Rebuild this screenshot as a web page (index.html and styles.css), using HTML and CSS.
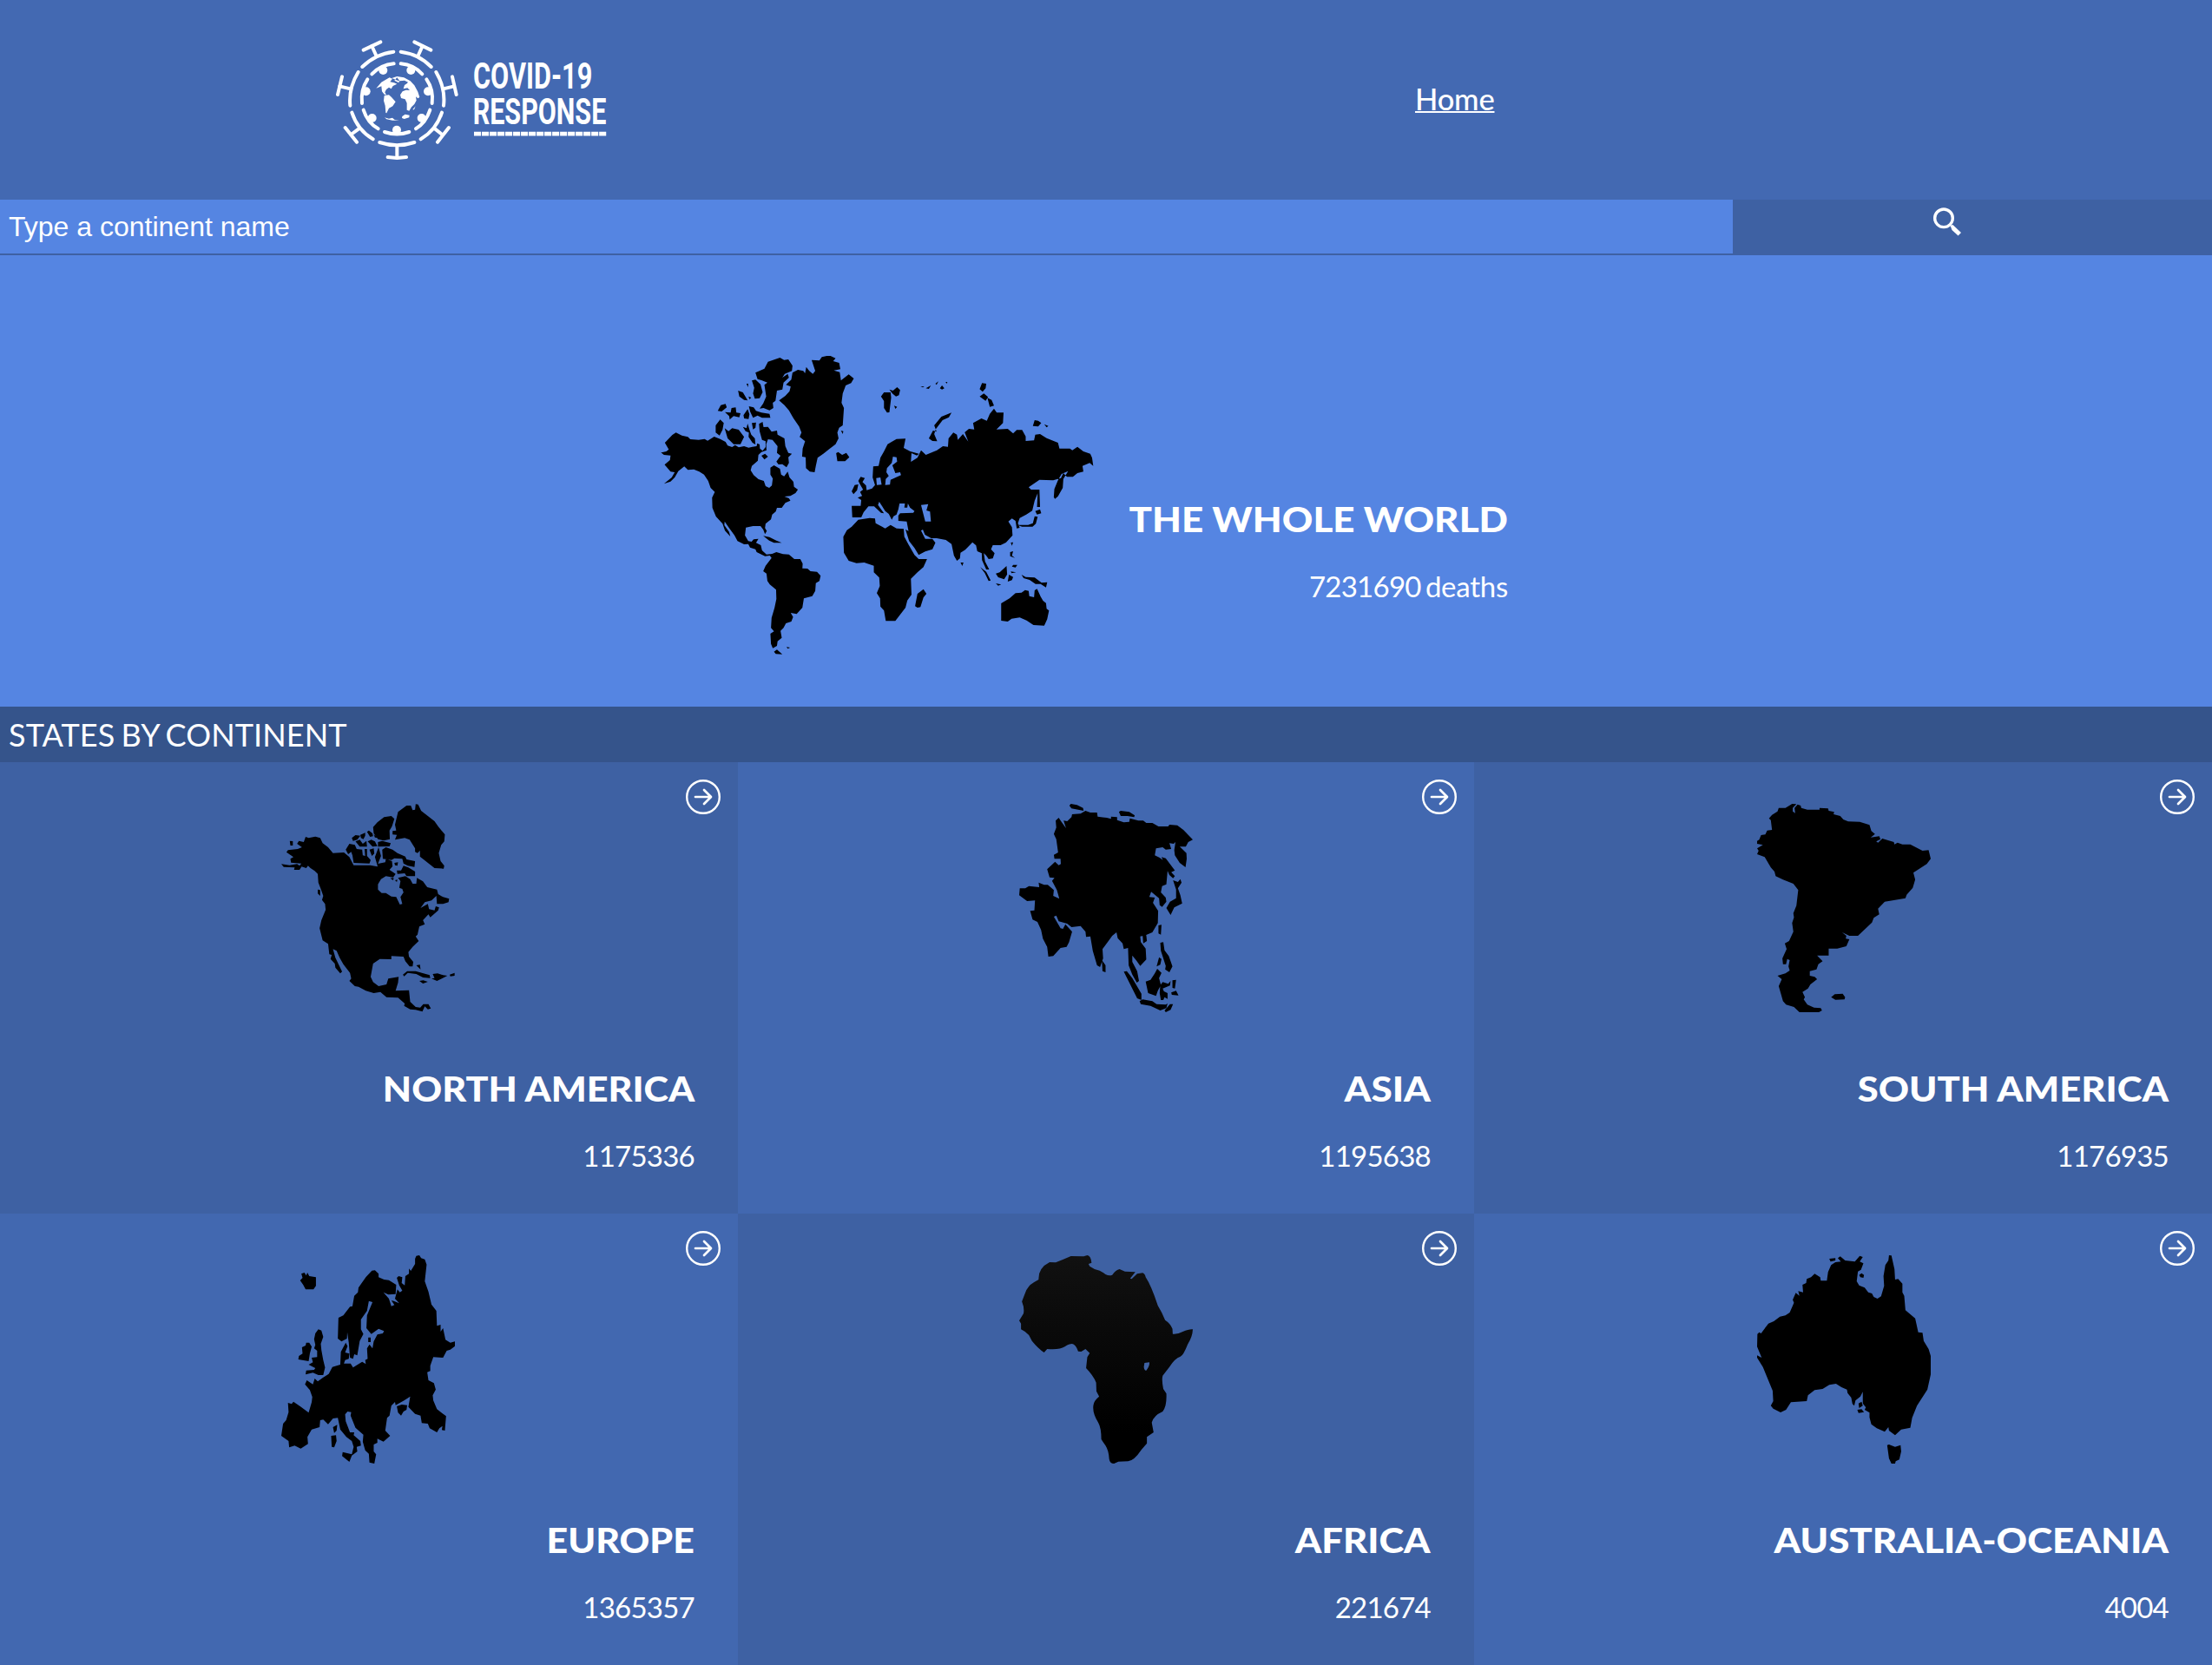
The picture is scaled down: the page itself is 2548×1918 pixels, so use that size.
FILE: index.html
```html
<!DOCTYPE html>
<html lang="en">
<head>
<meta charset="utf-8">
<title>Covid-19 Response</title>
<link rel="stylesheet" href="styles.css">
</head>
<body>
<svg class="defs" width="0" height="0">
  <symbol id="arrow" viewBox="0 0 40 40"><circle cx="20" cy="20" r="18.8" fill="none" stroke="#fff" stroke-width="2.4"/><path d="M11 20H28M21 12L29 20L21 28" fill="none" stroke="#fff" stroke-width="2.7" stroke-linecap="round" stroke-linejoin="round"/></symbol>
</svg>
<header class="header">
  <svg class="logo" viewBox="51 48 936 414">
    <g fill="none" stroke="#fff" stroke-width="12" stroke-linecap="round" stroke-linejoin="round">
      <path d="M142 141Q188 96 250 89M275 89Q338 97 380 141M128 159Q94 215 100 275M397 159Q430 215 423 275M106 299Q126 360 179 391M417 299Q397 360 344 391M202 402Q262 422 322 402"/>
      <path d="M146 83L205 55M322 55L379 83M72 175L57 237M453 175L467 237M83 351L123 401M441 351L402 401M230 453L262 456L294 453"/>
      <path d="M175 69L190 102M350 69L335 102M64 208L101 217M459 208L422 217M103 375L133 353M418 375L390 353M262 414V452"/>
      <path d="M175 166Q206 134 251 130M275 130Q320 134 349 166M160 184Q136 220 141 267M364 184Q389 220 383 267M146 290Q160 334 197 355M376 290Q362 334 327 355M219 366Q262 381 304 366"/>
    </g>
    <g fill="#fff">
      <circle cx="214" cy="153" r="15"/><circle cx="310" cy="153" r="15"/><circle cx="155" cy="226" r="15"/><circle cx="369" cy="226" r="15"/><circle cx="176" cy="318" r="15"/><circle cx="347" cy="318" r="15"/><circle cx="261" cy="359" r="15"/>
      <path d="M190 215L208 194L236 178L246 182L238 193L252 196L262 200L248 207L242 217L234 212L225 219L220 229L225 238L218 236L210 226L208 208ZM218 240L234 238L243 246L257 262L247 277L234 284L226 301L223 300L221 275L216 258ZM244 180L262 174L286 178L308 190L322 205L334 227L340 246L334 250L327 244L329 257L322 270L312 280L304 293L296 290L296 266L290 253L276 249L273 238L281 226L293 221L306 222L298 214L284 217L288 204L296 199L300 194L288 188L272 190L264 188ZM262 178L253 188L268 196L270 188ZM316 289L326 277L321 289ZM219 316L234 320L246 317L254 324L270 326L246 326L226 322ZM280 312L290 305L305 308L304 316L287 321L279 318Z"/>
      <text class="logo-text" x="525" y="216" textLength="412" lengthAdjust="spacingAndGlyphs">COVID-19</text>
      <text class="logo-text" x="524" y="339" textLength="461" lengthAdjust="spacingAndGlyphs">RESPONSE</text>
    </g>
    <path d="M528 372.500H985" stroke="#fff" stroke-width="14" stroke-dasharray="24.200 2.830"/>
  </svg>
  <nav class="nav"><a class="nav-link" href="#">Home</a></nav>
</header>
<form class="search">
  <input class="search-input" type="text" placeholder="Type a continent name">
  <button class="search-button" type="button" aria-label="Search"><svg class="search-icon" viewBox="0 0 32 34"><ellipse cx="12" cy="12.300" rx="10.300" ry="10.300" fill="none" stroke="#fff" stroke-width="3.400"/><path d="M19.500 20.800L22.500 20L32 29L28.600 32.500L21.500 26Z" fill="#fff"/></svg></button>
</form>
<section class="hero">
  <svg class="world" viewBox="58 60 1452 1032" preserveAspectRatio="none">
    <path d="M62 394L80 390L88 383L75 360L100 333L112 325L132 335L152 340L160 348L188 350L208 347L218 353L240 339L260 347L278 357L285 370L300 375L310 368L322 376L340 372L355 377L368 374L382 372L384 362L392 366L393 380L402 388L412 375L412 355L400 350L392 320L390 295L402 288L405 306L420 305L432 322L450 318L452 332L475 345L478 372L488 395L500 398L488 410L490 430L482 445L468 434L455 435L448 425L462 405L450 395L452 372L435 350L420 348L414 365L415 386L398 392L388 402L386 422L366 440L362 455L372 472L388 486L406 492L412 510L424 516L433 508L436 484L428 470L428 446L440 438L460 450L464 470L474 476L486 460L492 480L505 495L507 512L520 522L512 534L495 544L475 546L490 552L495 560L478 568L466 585L450 585L446 598L434 608L430 625L412 640L410 655L416 665L410 676L404 660L395 648L370 648L346 653L343 680L354 700L365 702L372 694L388 692L380 706L396 714L400 732L415 746L434 744L448 738L470 745L490 746L508 762L528 762L536 778L535 794L552 795L562 804L584 806L596 820L592 838L580 845L578 872L568 890L540 898L535 930L516 952L496 948L504 962L498 978L480 984L472 1000L462 1010L466 1034L452 1046L450 1062L436 1070L430 1055L428 1020L440 1012L430 1000L432 965L442 930L448 900L447 868L426 850L418 838L415 812L404 804L412 785L432 758L426 750L410 752L382 738L378 728L360 722L354 710L340 711L318 700L308 680L290 655L275 632L274 645L290 668L294 684L276 664L268 640L246 615L234 585L233 550L242 530L228 516L220 492L206 470L190 460L172 452L152 454L140 442L120 458L108 480L94 494L72 502L98 480L108 462L94 460L74 436L92 420L94 404L72 402Z"/>
    <path d="M457 214L478 198L492 182L496 166L480 160L498 142L502 118L520 108L538 112L544 120L548 98L558 112L570 122L578 112L566 74L592 76L600 64L625 58L646 68L638 78L658 84L662 106L640 110L660 116L664 145L690 124L707 138L698 154L680 162L670 190L666 222L674 240L672 270L670 300L658 308L652 325L656 345L646 365L625 382L605 398L586 412L580 440L576 462L560 460L547 448L546 410L534 408L536 380L544 355L526 340L532 325L524 304L505 275L490 248L475 230Z"/>
    <path d="M378 118L408 104L420 80L460 66L474 74L488 72L502 94L500 112L476 122L468 135L486 122L490 135L472 152L468 176L450 180L445 215L436 222L438 240L425 248L405 240L392 242L404 224L414 200L408 160L418 152L398 144L385 140ZM366 145L378 142L395 158L402 185L392 206L376 208L370 190L374 170ZM320 180L336 186L352 214L340 212L324 200ZM348 156L354 156L353 168ZM355 200L364 204L358 210ZM252 250L262 230L278 226L282 238L265 252ZM276 254L295 256L298 240L312 238L314 256L328 258L324 272L305 268L292 280L290 268ZM338 265L352 244L358 262L355 278L340 276ZM356 234L372 238L380 250L398 256L425 260L428 274L400 274L385 266L370 274L360 252ZM245 300L260 280L272 292L268 315L258 335L245 325ZM275 310L288 320L300 310L322 315L340 340L328 365L305 365L285 345ZM336 305L348 310L352 294L358 315L364 332L376 345L378 366L368 360L355 340L356 325L345 320ZM366 292L380 290L378 308L370 314ZM398 405L410 398L420 408L408 418ZM648 396L655 392L668 402L682 395L692 410L678 424L652 424ZM664 318L672 320L670 330ZM798 200L808 186L830 186L832 204L826 255L818 256L808 240L808 216ZM826 176L838 180L852 168L862 178L858 196L848 200L836 190ZM842 232L852 236L846 243ZM930 165L943 166L938 169ZM948 172L965 162L958 174ZM980 156L990 148L984 160ZM995 172L1002 162L1010 172L1002 176ZM1014 150L1020 150L1018 156ZM958 345L972 318L984 322L976 300L1000 270L1034 256L1025 272L1004 282L982 312L976 330L986 355L970 354ZM1128 175L1136 154L1150 156L1148 172L1138 184ZM1128 200L1142 190L1156 202L1148 215ZM1154 205L1168 212L1176 232L1162 236ZM1306 302L1312 282L1324 284L1334 292L1324 304ZM1344 296L1358 302L1352 307ZM1376 548L1378 520L1390 490L1402 468L1424 458L1408 485L1406 516L1390 545L1380 554ZM700 528L710 506L722 504L718 524L706 538ZM720 550L735 544L728 530L738 522L728 504L722 492L730 478L744 482L736 496L748 508L750 524L768 518L778 506L770 480L772 442L790 440L796 412L808 390L820 365L850 347L880 346L874 378L896 390L925 398L918 404L900 396L898 426L920 412L932 386L948 402L985 386L1005 372L1022 374L1024 345L1040 325L1052 332L1055 350L1072 330L1090 356L1078 324L1092 312L1110 314L1106 292L1134 276L1152 284L1162 260L1176 242L1185 256L1208 256L1206 292L1184 314L1222 312L1240 328L1252 316L1270 316L1282 338L1282 354L1310 352L1314 332L1330 330L1352 344L1390 360L1395 380L1430 380L1438 386L1455 374L1475 390L1498 398L1504 412L1508 440L1496 430L1472 440L1475 460L1455 465L1440 478L1420 478L1408 465L1400 482L1374 490L1328 488L1292 514L1300 522L1328 522L1330 582L1320 582L1322 535L1312 560L1304 595L1284 608L1262 620L1256 638L1262 654L1252 656L1248 630L1236 622L1224 632L1236 652L1238 680L1216 705L1198 714L1172 714L1166 728L1178 742L1172 760L1158 762L1150 750L1142 742L1146 770L1160 798L1150 798L1136 766L1135 742L1120 735L1116 715L1104 704L1080 730L1064 740L1062 760L1052 768L1042 750L1034 710L1015 696L984 690L966 690L945 678L938 660L932 664L946 692L970 692L980 706L970 728L946 736L924 748L910 724L892 700L880 660L890 665L884 632L856 630L856 612L862 604L906 602L910 596L895 584L888 570L886 584L876 584L878 570L860 570L856 590L850 608L840 614L834 626L824 606L812 596L792 564L788 575L808 604L798 602L775 580L756 580L740 600L732 618L702 618L700 578L730 578L732 558ZM812 506L828 505L830 488L865 472L862 462L846 465L836 438L852 425L850 410L838 408L834 430L818 448L816 462L824 475L814 485ZM782 482L796 480L800 505L784 506ZM932 575L938 600L946 632L965 632L962 598L950 594L956 572Z" fill-rule="evenodd"/>
    <path d="M700 650L722 626L760 620L778 622L780 638L812 656L830 644L850 656L874 658L876 685L890 712L910 748L924 762L952 762L940 790L920 808L898 830L900 885L886 905L880 930L846 976L814 976L808 940L796 926L795 898L784 880L794 855L792 826L774 808L774 785L742 774L716 776L690 768L674 740L672 685L684 662ZM912 925L920 882L940 866L950 882L940 895L930 928L920 930ZM1200 975V915L1228 898L1248 880L1268 878L1280 869L1292 872L1294 890L1310 894L1312 870L1320 865L1332 892L1340 906L1350 914L1352 934L1360 940L1354 970L1344 992L1308 990L1285 974L1262 964L1235 968L1222 978ZM1268 816L1282 824L1312 826L1335 844L1354 842L1350 860L1332 848L1315 848L1295 834L1275 828ZM1182 812L1195 808L1218 786L1220 815L1210 832L1190 825ZM1130 790L1150 806L1165 836L1158 838L1145 810ZM1182 846L1200 850L1190 854ZM1226 816L1240 824L1236 835L1222 840ZM1232 805L1250 808L1235 811ZM1240 782L1254 782L1248 791L1236 788ZM1230 738L1240 735L1236 750L1246 758L1230 752ZM1232 705L1240 704L1236 716ZM1064 774L1074 774L1070 786ZM1314 596L1330 590L1334 604L1320 608ZM1312 614L1322 616L1316 640L1305 650L1270 650L1254 644L1290 644L1306 638ZM404 682L425 686L448 698L466 706L440 706L424 698ZM440 1082L450 1075L468 1091L446 1090ZM482 1066L494 1068L486 1072Z"/>
  </svg>
  <div class="hero-text"><h2 class="title title-world">THE WHOLE WORLD</h2><p class="count">7231690 <span class="unit">deaths</span></p></div>
</section>
<h3 class="bar">STATES BY CONTINENT</h3>
<main class="grid">
  <article class="card card-dark">
    <svg class="go"><use href="#arrow"/></svg>
    <svg class="map" viewBox="68 78 571 720" preserveAspectRatio="none">
      <path d="M68 286L95 290L120 286L128 292L134 284L100 281L98 268L108 262L85 245L90 238L122 234L136 228L120 216L126 206L142 210L148 192L158 196L180 191L196 196L204 214L222 228L238 248L274 246L292 262L306 290L360 290L385 295L376 262L388 228L396 258L386 285L410 280L412 268L432 276L434 294L424 306L444 320L436 332L412 328L396 338L386 356L386 374L398 386L412 386L430 398L446 400L458 426L466 424L460 400L470 384L466 372L456 368L460 345L452 334L476 328L492 338L500 354L512 354L514 334L534 346L548 366L580 374L584 390L600 400L620 406L618 418L600 424L580 424L578 396L562 412L540 418L526 438L550 424L554 442L572 446L576 432L587 436L584 446L558 470L552 460L534 480L540 494L522 502L516 530L510 536L520 552L500 572L486 590L488 606L502 624L500 640L490 640L476 622L470 606L430 604L430 615L392 614L370 630L362 676L370 694L388 708L414 702L420 682L454 676L452 696L444 724L488 722L492 762L510 780L525 782L535 770L552 770L560 785L550 788L540 778L532 796L510 790L492 788L472 776L474 768L452 748L414 746L394 728L372 732L346 724L322 710L310 708L292 690L298 682L294 662L272 632L260 610L250 586L238 580L246 610L258 636L268 658L262 664L246 644L244 630L230 614L234 600L226 598L222 562L204 550L194 508L200 480L214 444L212 424L202 410L206 396L198 372L190 350L188 320L178 310L164 300L156 292L150 300L135 295L128 306L110 306L112 298L76 296ZM96 206L106 207L106 222L98 222ZM188 374L196 376L196 396L188 388ZM280 236L292 216L310 220L316 234L334 236L336 256L344 258L342 234L350 234L350 258L362 272L358 284L306 282L302 256L298 244L288 252ZM358 236L372 232L374 250L366 258ZM400 236L412 228L434 236L450 248L476 260L480 270L508 276L506 296L484 292L470 284L466 268L440 266L430 272L402 268ZM448 308L462 308L470 292L486 298L508 312L508 328L480 328L474 318L450 320ZM440 282L452 280L450 292L442 290ZM426 335L438 334L436 342ZM442 342L450 340L448 348ZM300 196L312 186L328 188L318 202L304 206ZM328 185L344 178L344 188L338 200L330 196ZM350 175L356 170L368 180L370 190L360 192ZM312 208L326 202L336 216L348 206L350 226L326 226ZM352 208L364 202L376 208L384 224L368 226ZM370 158L384 142L406 124L430 120L440 130L432 156L424 170L425 200L405 205L386 200L372 180ZM386 210L400 206L428 214L424 225L386 226ZM372 184L386 196L376 194ZM442 150L452 106L480 84L494 84L500 100L508 98L510 79L518 80L528 102L572 138L584 156L606 184L604 208L594 220L586 248L592 276L604 292L602 302L572 300L524 260L524 240L516 248L508 244V232L490 202L474 196L442 202L448 185L434 184L434 172L446 170ZM468 668L482 656L510 656L556 670L558 680L534 678L512 666L484 662L472 674ZM522 690L535 688L550 693L534 699ZM562 682L572 680L566 666L582 664L600 670L614 672L580 690ZM622 668L638 662L638 672L624 674ZM512 636L524 634L526 650Z"/>
    </svg>
    <h2 class="title title-namerica">NORTH AMERICA</h2><p class="count">1175336</p>
  </article>
  <article class="card card-light">
    <svg class="go"><use href="#arrow"/></svg>
    <svg class="map" viewBox="68 78 571 720" preserveAspectRatio="none">
      <path d="M233 84L238 78L258 82L278 92L280 102L262 98L240 94ZM396 106L402 102L430 106L448 118L446 124L424 120L402 120ZM242 114L270 112L286 102L302 108L324 108L326 122L356 126L370 130L370 122L390 124L390 134L412 142L430 140L432 128L460 136L476 136L486 144L506 144L526 156L558 156L562 150L588 152L608 168L639 202L624 210L616 226L596 226L618 248L619 268L615 297L596 282L580 256L578 238L582 210L576 216L562 214L568 234L550 236L540 228L518 232L514 256L530 264L545 276L556 310L552 356L538 362L534 384L550 402L552 416L538 434L530 428L528 404L502 382L496 400L514 402L508 420L525 448L524 490L506 522L484 532L466 536L468 556L484 578L486 616L466 638L454 620L440 602L440 624L456 656L462 690L455 696L440 668L428 636L426 576L412 580L408 560L392 542L388 522L374 534L360 554L342 580L344 612L334 642L324 636L310 586L302 536L288 538L286 520L270 500L240 504L226 492L198 484L190 464L182 468L204 508L212 510L220 494L242 520L232 556L224 572L204 576L180 604L164 606L160 572L146 544L140 514L128 486L112 478L104 448L118 446L120 412L94 414L68 394L70 370L88 370L100 362L134 366L132 350L150 358L162 358L182 376L180 396L200 406L192 376L176 344L184 334L168 332L160 304L186 278L198 290L205 286L204 268L184 268L182 254L196 246L190 200L182 182L190 160L188 136L198 126L208 142L222 162L214 136L226 138L240 124ZM536 262L550 266L580 308L568 314L580 328L574 335L562 324ZM574 342L590 348L598 338L602 350L590 370L598 394L604 422L578 436L566 462L552 438L564 416L584 404L584 374ZM474 532L486 532L488 552L476 560ZM526 498L536 496L534 530L526 526ZM532 558L542 556L546 584L560 604L572 640L562 660L548 650L550 638L534 586ZM520 640L528 608L536 614L532 634ZM340 618L352 636L352 660L342 656ZM412 658L422 656L440 680L470 734L470 756L456 750ZM484 692L500 686L514 664L522 648L536 662L528 680L534 704L524 724L518 742L492 732ZM532 705L540 694L558 700L566 690L564 706L540 716L544 726L556 732L556 752L546 746L542 756L534 756L530 732ZM572 688L584 686L580 716L572 714ZM568 730L584 724L592 740L570 738ZM464 760L474 754L506 760L520 770L550 772L556 768L552 784L532 792L500 776L468 770ZM546 792L564 770L574 770L566 790L550 798Z"/>
    </svg>
    <h2 class="title title-asia">ASIA</h2><p class="count">1195638</p>
  </article>
  <article class="card card-dark">
    <svg class="go"><use href="#arrow"/></svg>
    <svg class="map" viewBox="97 78 570 720" preserveAspectRatio="none">
      <path d="M97 206L104 202L110 186L124 184L130 170L146 168L142 134L136 128L146 116L164 104L168 92L190 92L212 78L226 79L214 92L214 104L222 110L220 92L230 80L240 84L242 92L262 98L302 98L302 92L330 94L332 102L350 106L348 114L370 120L380 132L396 139L434 140L466 151L472 172L484 182L470 194L498 190L502 200L488 208L494 212L508 198L546 210L548 218L558 212L574 218L600 218L640 240L660 238L667 268L654 286L610 316L616 340L608 368L588 392L584 404L516 416L494 440L498 460L480 472L474 488L428 534L400 534L376 522L390 534L388 544L400 546L390 570L360 578L332 578L332 602L294 602L312 622L298 632L292 650L270 656L270 672L286 676L294 684L272 702L264 716L246 728L254 746L250 754L262 772L284 782L306 784L310 792L300 798L236 798L218 780L192 772L182 760L168 708L178 684L164 672L190 664L204 654L200 640L204 618L196 614L192 632L182 632L180 612L194 580L188 560L202 552L216 520L212 490L218 470L216 456L226 430L232 376L216 354L182 340L158 328L154 312L142 298L122 262L97 252L102 240L97 232L116 220L97 216ZM340 746L352 736L378 734L386 746L384 754L354 755Z"/>
    </svg>
    <h2 class="title title-samerica">SOUTH AMERICA</h2><p class="count">1176935</p>
  </article>
  <article class="card card-light">
    <svg class="go"><use href="#arrow"/></svg>
    <svg class="map" viewBox="68 78 571 720" preserveAspectRatio="none">
      <path d="M130 165L138 156L134 142L144 138L150 148L154 138L160 150L182 154L182 184L174 196L148 196L140 180ZM180 348L190 334L200 338L206 360L198 384L200 406L206 440L212 466L206 492L190 492L172 484L148 490L150 476L176 474L180 468L158 456L172 448L168 432L186 430L186 408L176 400L180 388L176 368ZM136 396L148 390L150 380L160 380L168 394L162 418L158 444L124 438L126 426L138 418ZM68 702L74 660L84 648L92 620L90 588L102 592L108 584L130 600L158 622L168 586L170 568L162 544L146 524L152 510L172 524L178 504L188 514L206 500L224 488L236 464L262 456L264 412L280 380L286 392L278 414L292 418L290 436L278 440L274 452L296 452L304 466L334 446L346 454L344 440L352 436L350 400L358 386L368 400L372 376L384 352L402 348L406 340L388 332L364 350L348 330L350 286L368 240L356 236L350 270L330 300L330 334L338 350L326 374L318 424L308 420L304 436L294 432L290 380L285 344L284 366L266 376L254 366L256 294L272 286L294 256L302 254L308 218L320 206L322 190L346 154L366 131L376 130L388 142L388 154L406 162L422 164L446 180L444 212L420 214L404 206L422 228L430 254L440 250L430 234L438 236L456 244L442 228L450 196L458 206L466 200L456 182L448 156L454 150L466 154L464 174L474 182L476 150L488 142L488 124L494 132L508 108L508 90L512 80L522 78L528 88L540 92L546 110L540 168L552 204L562 248L578 270L580 322L592 318L592 342L600 330L608 370L624 380L639 376L639 392L624 404L612 408L600 432L568 430L558 460L558 478L548 482L552 510L570 520L576 542L566 562L568 580L580 610L610 634L606 684L596 682L598 668L588 676L580 690L556 676L550 660L530 658L526 632L508 626L486 602L492 566L472 580L444 596L442 585L430 598L424 632L416 640L410 684L426 702L404 722L384 712L384 726L372 732L372 756L380 766L374 798L358 794L356 764L344 752L336 722L338 698L312 674L296 632L298 620L286 618L278 628L280 652L294 690L308 690L306 700L328 720L330 736L316 740L318 756L300 770L292 792L268 772L270 758L300 766L306 740L300 720L282 706L262 680L254 640L238 642L222 662L206 646L196 648L194 672L168 680L154 706L156 730L132 746L112 736L94 742L92 720ZM354 362L362 362L362 378L354 378ZM238 672L252 664L250 684L242 692ZM232 702L248 700L250 720L242 742L234 740ZM448 600L464 594L482 596L480 612L470 618L462 632L452 622Z"/>
    </svg>
    <h2 class="title title-europe">EUROPE</h2><p class="count">1365357</p>
  </article>
  <article class="card card-dark">
    <svg class="go"><use href="#arrow"/></svg>
    <svg class="map" viewBox="68 78 571 720" preserveAspectRatio="none">
      <defs><linearGradient id="shade" x2="0" y2="1"><stop stop-color="#111"/><stop offset=".85" stop-color="#000"/></linearGradient></defs>
      <path fill="url(#shade)" fill-rule="evenodd" d="M132 162Q130 122 168 102L188 103Q210 94 238 81L280 82L292 78Q304 80 306 104L296 108L300 116L316 126Q336 130 352 144Q364 150 374 146Q386 128 398 126L416 134L450 136L433 158L438 160L456 142L474 139Q482 142 484 154Q502 182 524 252Q538 276 548 302Q564 312 572 332L573 350Q588 352 606 342Q628 332 639 334Q638 360 622 386Q608 424 598 428Q580 434 562 464L540 494Q536 508 542 540L552 556Q554 600 540 618Q510 632 504 656L510 690L488 706L488 728L470 750Q446 788 426 790L394 791L380 798Q366 798 364 782Q362 752 352 736L338 714Q338 674 328 656Q308 622 312 596Q314 580 331 566L322 548L321 518Q312 494 288 468L292 430L300 416L286 402L272 411L262 410Q254 386 242 384Q232 384 218 394Q200 406 160 402L150 414Q130 400 110 374L100 354Q90 342 74 334V314L68 304L82 280Q86 262 77 238Q82 224 88 208Q96 184 116 172ZM480 450L496 448Q498 460 486 476Q480 478 478 464Z"/>
    </svg>
    <h2 class="title title-africa">AFRICA</h2><p class="count">221674</p>
  </article>
  <article class="card card-light">
    <svg class="go"><use href="#arrow"/></svg>
    <svg class="map" viewBox="97 78 570 720" preserveAspectRatio="none">
      <path d="M97 394L98 350L104 344L110 348L134 314L152 306L172 290L190 286L204 276L218 242L214 232L224 208L236 218L232 202L248 206L246 180L258 174L260 160L274 154L286 142L304 154L306 166L326 166L330 136L340 112L354 102L372 100L362 88L370 82L386 96L418 100L434 80L444 84L434 100L446 106L438 128L428 134L424 168L432 182L450 190L462 206L474 210L480 222L492 228L504 220L514 184L512 150L518 112L528 96L530 78L538 79L548 126L550 162L560 160L574 176L574 206L580 218L584 268L616 296L626 344L640 346L644 374L660 402L667 426V490L656 542L622 598L606 640L600 674L570 680L550 700L530 684L528 672L516 688L490 676L472 662L466 638L466 622L450 612L454 604L444 590L444 550L436 566L420 580L416 598L410 592L406 570L394 554L392 542L374 534L356 522L334 526L312 540L286 544L264 562L260 582L208 586L192 612L174 621L150 608L142 598L150 582L148 546L116 464L97 432V424L112 432L104 412ZM334 90L354 88L354 96L338 100ZM432 146L440 140L448 146L446 156L436 154ZM430 590L440 584L444 598L432 606ZM426 612L440 610L448 620L430 623ZM524 734L530 732L550 740L568 734L570 756L564 784L552 790L550 798L538 798L530 780Z"/>
    </svg>
    <h2 class="title title-australia">AUSTRALIA-OCEANIA</h2><p class="count">4004</p>
  </article>
</main>
</body>
</html>
```
FILE: styles.css
```css
* { box-sizing: border-box; }
body { margin: 0; background: #4369b2; color: #fff; font-family: Lato, sans-serif; }
h2, h3, p { margin: 0; }
.defs { display: none; }
.header { display: flex; align-items: center; gap: 931px; height: 230px; padding-left: 387px; }
.logo { width: 312px; height: 138px; overflow: visible; }
.logo-text { font-family: Roboto, sans-serif; font-size: 130px; font-weight: 700; }
.nav { padding-bottom: 2px; }
.nav-link { color: #fff; font-size: 34.5px; font-weight: 500; line-height: 40px; text-decoration-thickness: 2px; letter-spacing: -0.2px; }
.search { display: flex; height: 64px; background: #3e61a3; }
.search-input { width: 1996px; height: 62px; padding: 0 10px; border: 0; border-radius: 0; background: #5585e2; color: #fff; font: 32px "Liberation Sans", sans-serif; outline: 0; }
.search-input::placeholder { color: #fff; opacity: 1; }
.search-button { display: flex; flex: 1; justify-content: center; align-items: flex-start; padding: 9px 0 0; border: 0; background: none; }
.search-icon { width: 32px; height: 34px; margin-left: -58px; }
.hero { display: flex; justify-content: center; height: 520px; padding-top: 116px; background: #5585e2; }
.world { width: 500px; height: 344px; }
.hero-text { width: 528px; padding: 164px 51px 0 0; text-align: right; }
.bar { height: 64px; padding-left: 10px; background: #35548b; font-size: 36px; font-weight: 400; line-height: 65px; letter-spacing: 0.1px; word-spacing: -2px; }
.grid { display: grid; grid-template-columns: 850px 848px 850px; grid-auto-rows: 520px; }
.card { display: flex; flex-direction: column; align-items: flex-end; padding: 20px 20px 0 0; }
.card-dark { background: #3e61a3; }
.card-light { background: #4268b0; }
.go { width: 40px; height: 40px; }
.map { width: 200px; height: 240px; margin: -12px auto 64px; transform: translateX(10px); }
.card:nth-child(3n + 1) .map { transform: translateX(9px); }
.card:nth-child(3n) .map { transform: translateX(11px); }
/* The headings are drawn a little wider than the face's own proportions */
.title { font-size: 39px; font-weight: 900; line-height: 48px; white-space: nowrap; transform: scaleX(1.116); transform-origin: right; }
.title-world { transform: scaleX(1.126); }
.title-namerica { transform: scaleX(1.105); }
.title-asia { transform: scaleX(1.13); }
.title-europe { transform: scaleX(1.1); }
.title-australia { transform: scaleX(1.125); }
.card .title, .card .count { margin-right: 30px; }
.count { font-size: 33px; line-height: 40px; margin-top: 33px; letter-spacing: -0.75px; word-spacing: -2.5px; }
.unit { letter-spacing: -0.25px; }
```
